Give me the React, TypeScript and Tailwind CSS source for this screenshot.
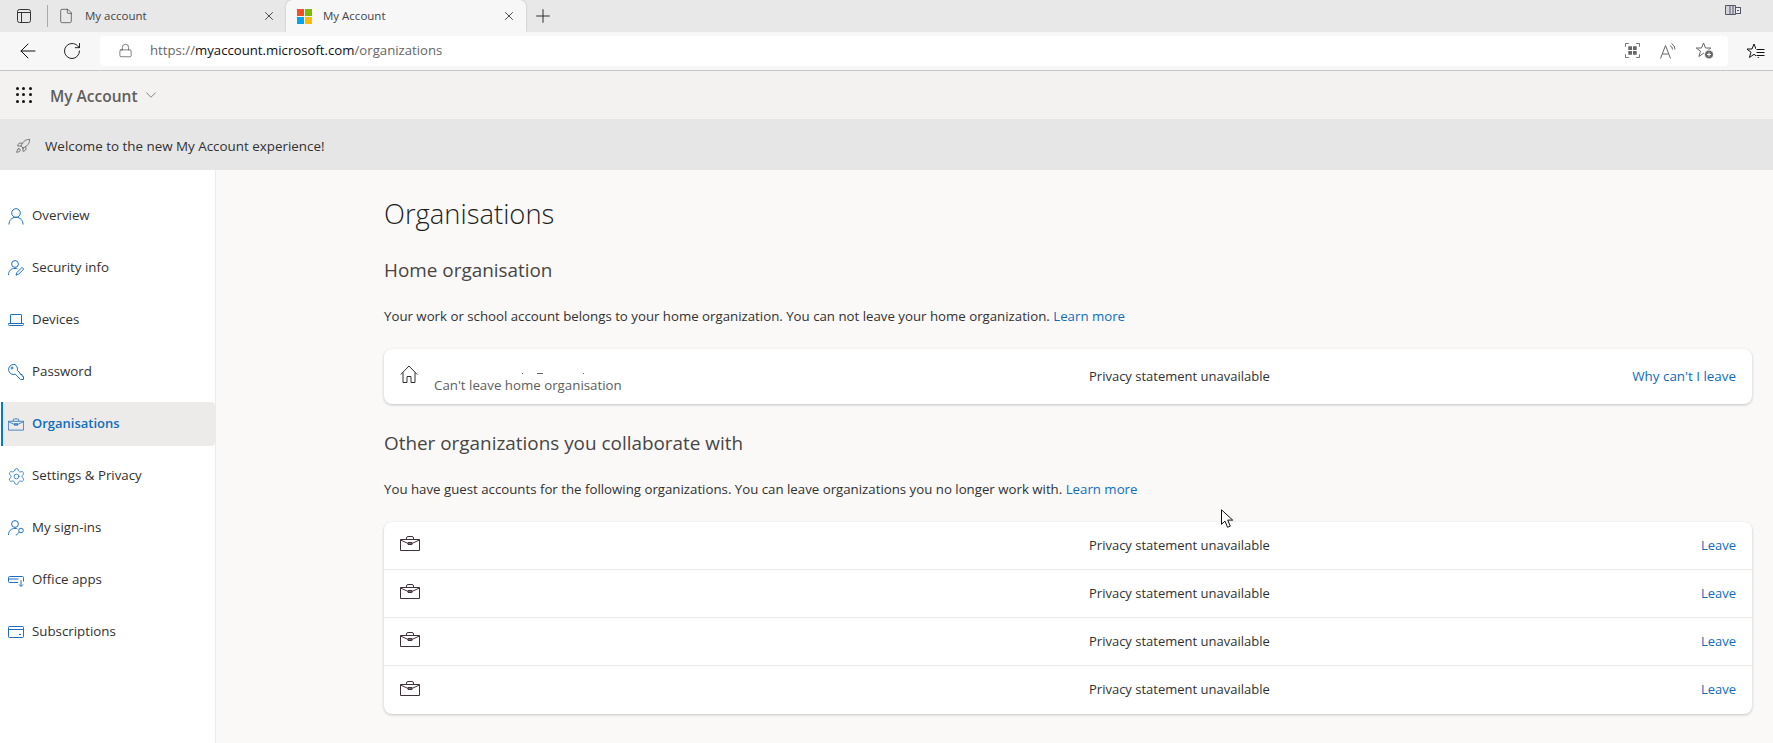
import { ArrowLeft, ChevronDown, File, Lock, Plus, RotateCw, Rocket, Settings, X } from "lucide-react";
import type { ReactNode } from "react";

const Briefcase = ({ className }: { className: string }) => (
	<svg viewBox="0 0 20 15" className={className} fill="none" stroke="currentColor" strokeWidth="1">
		<path d="M0.5 3.5h19v11h-19z" />
		<path d="M0.5 4l7 3.2h5l7-3.2" />
		<path d="M8 6.5h4v2h-4z" />
		<path d="M6.5 3.5v-1.5a1.5 1.5 0 0 1 1.5-1.5h4a1.5 1.5 0 0 1 1.5 1.5v1.5" />
	</svg>
);

const Person = () => (
	<svg viewBox="0 0 16 17" className="h-[17px] w-4" fill="none" stroke="currentColor" strokeWidth="1">
		<circle cx="8" cy="5" r="4.300" />
		<path d="M1 16.500c0-4 2.500-7.200 7-7.200s7 3.200 7 7.200" />
	</svg>
);

const PersonEdit = () => (
	<svg viewBox="0 0 16 16" className="h-4 w-4" fill="none" stroke="currentColor" strokeWidth="1">
		<circle cx="7" cy="4" r="3.400" />
		<path d="M0.500 15c0-4 2.500-6.600 6.500-6.600 1 0 1.800 0.200 2.500 0.500" />
		<path d="M8 15.200l1-2.800 5-5 1.700 1.700-5 5z" />
	</svg>
);

const PersonKey = () => (
	<svg viewBox="0 0 16 16" className="h-4 w-4" fill="none" stroke="currentColor" strokeWidth="1">
		<circle cx="7" cy="4" r="3.400" />
		<path d="M0.500 15c0-4 2.500-6.600 6.500-6.600 1 0 1.800 0.200 2.500 0.500" />
		<circle cx="13" cy="10.500" r="2.300" />
		<path d="M11.300 12.200l-3.500 3.300" />
	</svg>
);

const LaptopIcon = () => (
	<svg viewBox="0 0 16 12" className="h-3 w-4" fill="none" stroke="currentColor" strokeWidth="1">
		<path d="M2.500 9.500v-8.500a0.500 0.500 0 0 1 0.500-0.500h10a0.500 0.500 0 0 1 0.500 0.500v8.500" />
		<path d="M0.500 9.500h15v1a1 1 0 0 1-1 1h-13a1 1 0 0 1-1-1z" />
	</svg>
);

const KeyIcon = () => (
	<svg viewBox="0 0 16 16" className="h-4 w-4" fill="none" stroke="currentColor" strokeWidth="1">
		<path d="M5.500 0.500a5 5 0 1 0 1.800 9.700l5.200 5.300h3v-3l-1.500-0.500v-1.500h-1.500l-0.500-1.500-2.700-2.700a5 5 0 0 0-4.300-6.300z" />
		<circle cx="4" cy="4" r="1" />
	</svg>
);

const OfficeApps = () => (
	<svg viewBox="0 0 16 16" className="h-4 w-4" fill="none" stroke="currentColor" strokeWidth="1">
		<path d="M10 10.500h-8.500a1 1 0 0 1-1-1v-4a1 1 0 0 1 1-1h13a1 1 0 0 1 1 1v4" />
		<path d="M13 8v6M11 12.500l2 2 2-2" />
		<path d="M0.500 7h10" />
	</svg>
);

const CardIcon = () => (
	<svg viewBox="0 0 16 12" className="h-3 w-4" fill="none" stroke="currentColor" strokeWidth="1">
		<rect x="0.500" y="0.500" width="15" height="11" rx="0.800" />
		<path d="M0.500 3.500h15M11 8.500h2" />
	</svg>
);

const nav: { label: string; icon: ReactNode; active?: boolean }[] = [
	{ label: "Overview", icon: <Person /> },
	{ label: "Security info", icon: <PersonEdit /> },
	{ label: "Devices", icon: <LaptopIcon /> },
	{ label: "Password", icon: <KeyIcon /> },
	{ label: "Organisations", icon: <Briefcase className="h-[13px] w-4" />, active: true },
	{ label: "Settings & Privacy", icon: <Settings size={19} strokeWidth={1} className="shrink-0" /> },
	{ label: "My sign-ins", icon: <PersonKey /> },
	{ label: "Office apps", icon: <OfficeApps /> },
	{ label: "Subscriptions", icon: <CardIcon /> },
];

const OrgRow = ({ last }: { last?: boolean }) => (
	<div className={`grid h-12 grid-cols-[705px_1fr_auto] items-center pr-4 ${last ? "" : "border-b border-[#edebe9]"}`}>
		<div className="-mt-1 pl-4 text-[#40303a]">
			<Briefcase className="h-[15px] w-5" />
		</div>
		<div className="text-[#323130]">Privacy statement unavailable</div>
		<a className="text-[#0f6cbd]">Leave</a>
	</div>
);

export default function App() {
	return (
		<div className="relative flex h-[743px] w-[1773px] flex-col overflow-hidden bg-[#faf9f8] font-['Open_Sans',sans-serif] text-[13px] text-[#323130]">
			{/* tab strip */}
			<div className="flex h-8 shrink-0 items-center bg-[#e8e8e8] text-[11.5px] text-[#444]">
				<svg viewBox="0 0 16 16" className="ml-4 h-4 w-4" fill="none" stroke="#333" strokeWidth="1">
					<rect x="1.500" y="1.500" width="13" height="13" rx="2" />
					<path d="M1.500 4.500h13M5.500 4.500v10" />
				</svg>
				<div className="ml-[15px] h-[22px] w-px bg-[#aaa]" />
				<div className="flex h-8 w-[238px] items-center pl-[10px]">
					<File size={16} strokeWidth={1} color="#333" />
					<span className="ml-[11px]">My account</span>
					<X size={14} strokeWidth={1.5} color="#333" className="ml-auto mr-[10px]" />
				</div>
				<div className="flex h-8 w-[240px] items-center rounded-t-md bg-[#f7f7f7] pl-[11px] shadow-[0_0_2px_rgba(0,0,0,0.25)]">
					<div className="grid h-[15px] w-[15px] grid-cols-2 gap-px">
						<div className="bg-[#f25022]" />
						<div className="bg-[#7fba00]" />
						<div className="bg-[#00a4ef]" />
						<div className="bg-[#ffb900]" />
					</div>
					<span className="ml-[11px]">My Account</span>
					<X size={14} strokeWidth={1.5} color="#333" className="ml-auto mr-[10px]" />
				</div>
				<Plus size={22} strokeWidth={1} color="#222" className="ml-[6px]" />
				<svg viewBox="0 0 16 10" className="absolute left-[1725px] top-[5px] h-[10px] w-4" fill="none" stroke="#55556a" strokeWidth="1">
					<path d="M0.500 0.500h10v9h-10z" fill="#d4d4dc" />
					<path d="M5 0.500v9M8 0.500v9" />
					<rect x="10.500" y="2.500" width="5" height="6" fill="#eee" />
					<path d="M12 5.500h2" />
				</svg>
			</div>

			{/* address bar */}
			<div className="flex h-[39px] shrink-0 items-center border-b border-[#c8c6c4] bg-[#f7f7f7] pb-px">
				<ArrowLeft size={24} strokeWidth={1} color="#111" className="ml-[16px]" />
				<RotateCw size={20} strokeWidth={1.1} color="#111" className="ml-[22px]" />
				<div className="ml-[18px] flex h-[30px] w-[1628px] items-center rounded bg-white">
					<Lock size={15} strokeWidth={1} color="#333" className="ml-[18px]" />
					<div className="ml-[17px] text-[13.2px] text-[#666]">
						https://<span className="text-[#111]">myaccount.microsoft.com</span>/organizations
					</div>
					<div className="ml-auto mr-[14px] flex items-center gap-[20px] text-[#666]">
						<svg viewBox="0 0 16 16" className="h-[15px] w-[15px]" fill="none" stroke="currentColor" strokeWidth="1">
							<path d="M0.500 4v-3.500h3.500M12 0.500h3.500v3.500M15.500 12v3.500h-3.500M4 15.500h-3.500v-3.500" />
							<path d="M3.500 3.500h4v4h-4zM8.500 3.500h4v4h-4zM3.500 8.500h4v4h-4zM8.500 8.500h4v4h-4z" fill="currentColor" stroke="none" />
						</svg>
						<svg viewBox="0 0 16 16" className="h-4 w-4" fill="none" stroke="currentColor" strokeWidth="1">
							<path d="M0.500 15.500l5-13 5 13M2.500 11h6" />
							<path d="M10 2.500a4.500 4.500 0 0 1 2.500 4M11.500 0.500a6.500 6.500 0 0 1 3.500 6" />
						</svg>
						<svg viewBox="0 0 18 17" className="h-[17px] w-[18px]" fill="none" stroke="currentColor" strokeWidth="1">
							<path d="M7.500 1l2 5h5.300l-4.300 3.200 1.600 5.300-4.600-3.200-4.600 3.200 1.600-5.300-4.300-3.200h5.300z" />
							<circle cx="13" cy="12.500" r="4.500" fill="currentColor" stroke="#fff" />
							<path d="M13 10.500v4M11 12.500h4" stroke="#fff" />
						</svg>
					</div>
				</div>
				<svg viewBox="0 0 18 16" className="ml-[19px] h-4 w-[18px]" fill="none" stroke="#111" strokeWidth="1">
					<path d="M7 1l2 5h5.300l-4.300 3.200 1.600 5.300-4.600-3.200-4.600 3.200 1.600-5.300-4.300-3.200h5.300z" />
					<rect x="9" y="5" width="9" height="9" fill="#f7f7f7" stroke="none" />
					<path d="M9.500 6.500h8M9.500 9.500h8M9.500 12.500h8" />
				</svg>
			</div>

			{/* app header */}
			<div className="flex h-12 shrink-0 items-center bg-[#f3f2f1]">
				<div className="ml-4 grid h-4 w-4 grid-cols-3 gap-[3px]">
					{Array.from({ length: 9 }).map((_, i) => (
						<div key={i} className="h-[3px] w-[3px] rounded-full bg-[#111]" />
					))}
				</div>
				<span className="ml-[18px] mt-[3px] text-[15.5px] font-semibold text-[#605e5c]">My Account</span>
				<ChevronDown size={18} strokeWidth={1} color="#605e5c" className="ml-[4px]" />
			</div>

			{/* banner */}
			<div className="flex h-[51px] shrink-0 items-center bg-[#e6e6e6] pt-[3px] text-[13.4px]">
				<Rocket size={16} strokeWidth={1} color="#444" className="ml-[15px]" />
				<span className="ml-[14px]">Welcome to the new My Account experience!</span>
			</div>

			<div className="flex flex-1">
				<aside className="w-[216px] shrink-0 border-r border-[#edebe9] bg-white pt-6 text-[13.3px]">
					{nav.map((item) => (
						<div
							key={item.label}
							className={`mb-2 ml-px flex h-11 items-center gap-2 rounded-r pl-[7px] ${item.active ? "border-l-2 border-[#0078d4] !pl-[5px] bg-[#edebe9] text-[13px] font-semibold text-[#106ebe]" : ""}`}
						>
							<span className="flex w-4 justify-center text-[#1f6fc0]">{item.icon}</span>
							<span>{item.label}</span>
						</div>
					))}
				</aside>

				<main className="flex-1 pl-[168px] pr-[21px] pt-6">
					<h1 className="h-10 text-[27.4px] leading-10 font-light text-[#201f1e]">Organisations</h1>
					<h2 className="mt-[22px] h-7 text-[18.9px] leading-7 text-[#484644]">Home organisation</h2>
					<p className="mt-[22px] h-5 text-[13.25px] leading-5">
						Your work or school account belongs to your home organization. You can not leave your home organization. <a className="text-[#0f6cbd]">Learn more</a>
					</p>
					<div className="mt-[23px] grid h-[55px] grid-cols-[705px_1fr_auto] items-center rounded-lg bg-white pr-4 shadow-[0_1px_3px_rgba(0,0,0,0.22)]">
						<div className="flex self-start pl-4 pt-4">
							<svg viewBox="0 0 18 18" className="h-[18px] w-[18px] text-[#323130]" fill="none" stroke="currentColor" strokeWidth="1">
								<path d="M0.800 9.500l8.200-8.500 8.200 8.500" />
								<path d="M3 7.500v10h4v-6h4v6h4v-10" />
							</svg>
							<div className="ml-4">
								<div className="flex h-[11px] items-start gap-[14px] pl-[88px] pt-2">
									<div className="h-px w-px bg-[#666]" />
									<div className="h-px w-[6px] bg-[#666]" />
									<div className="ml-[26px] h-px w-px bg-[#666]" />
								</div>
								<div className="text-[13.3px] text-[#605e5c]">Can't leave home organisation</div>
							</div>
						</div>
						<div>Privacy statement unavailable</div>
						<a className="text-[13.4px] text-[#0f6cbd]">Why can't I leave</a>
					</div>
					<h2 className="mt-[25px] h-7 text-[18.9px] leading-7 text-[#484644]">Other organizations you collaborate with</h2>
					<p className="mt-[22px] h-5 text-[13.25px] leading-5">
						You have guest accounts for the following organizations. You can leave organizations you no longer work with. <a className="text-[#0f6cbd]">Learn more</a>
					</p>
					<div className="mt-[23px] rounded-lg bg-white shadow-[0_1px_3px_rgba(0,0,0,0.22)]">
						<OrgRow />
						<OrgRow />
						<OrgRow />
						<OrgRow last />
					</div>
				</main>
			</div>

			{/* mouse pointer */}
			<svg viewBox="0 0 13 20" className="absolute left-[1221px] top-[509px] h-5 w-[13px]" fill="#fff" stroke="#111" strokeWidth="1">
				<path d="M0.500 0.800v14.500l3.500-3.200 2.500 6.200 2.800-1.200-2.600-6h5z" />
			</svg>
		</div>
	);
}
